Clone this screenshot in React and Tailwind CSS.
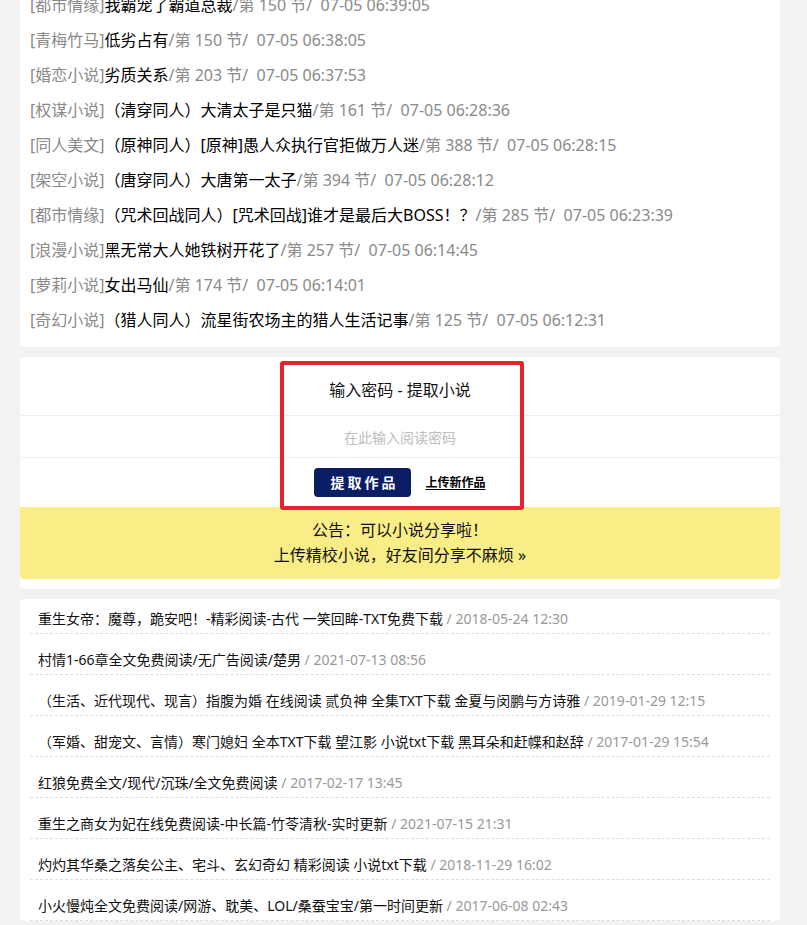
import React from "react";

const font = { fontFamily: '"Noto Sans", "Noto Sans CJK SC", sans-serif' };

const top = [
  ["都市情缘", "我霸宠了霸道总裁", "150", "07-05 06:39:05"],
  ["青梅竹马", "低劣占有", "150", "07-05 06:38:05"],
  ["婚恋小说", "劣质关系", "203", "07-05 06:37:53"],
  ["权谋小说", "（清穿同人）大清太子是只猫", "161", "07-05 06:28:36"],
  ["同人美文", "（原神同人）[原神]愚人众执行官拒做万人迷", "388", "07-05 06:28:15"],
  ["架空小说", "（唐穿同人）大唐第一太子", "394", "07-05 06:28:12"],
  ["都市情缘", "（咒术回战同人）[咒术回战]谁才是最后大BOSS！？", "285", "07-05 06:23:39"],
  ["浪漫小说", "黑无常大人她铁树开花了", "257", "07-05 06:14:45"],
  ["萝莉小说", "女出马仙", "174", "07-05 06:14:01"],
  ["奇幻小说", "（猎人同人）流星街农场主的猎人生活记事", "125", "07-05 06:12:31"],
];

const bottom = [
  ["重生女帝：魔尊，跪安吧！-精彩阅读-古代 一笑回眸-TXT免费下载", "2018-05-24 12:30"],
  ["村情1-66章全文免费阅读/无广告阅读/楚男", "2021-07-13 08:56"],
  ["（生活、近代现代、现言）指腹为婚 在线阅读 贰负神 全集TXT下载 金夏与闵鹏与方诗雅", "2019-01-29 12:15"],
  ["（军婚、甜宠文、言情）寒门媳妇 全本TXT下载 望江影 小说txt下载 黑耳朵和赶幉和赵辞", "2017-01-29 15:54"],
  ["红狼免费全文/现代/沉珠/全文免费阅读", "2017-02-17 13:45"],
  ["重生之商女为妃在线免费阅读-中长篇-竹苓清秋-实时更新", "2021-07-15 21:31"],
  ["灼灼其华桑之落矣公主、宅斗、玄幻奇幻 精彩阅读 小说txt下载", "2018-11-29 16:02"],
  ["小火慢炖全文免费阅读/网游、耽美、LOL/桑蚕宝宝/第一时间更新", "2017-06-08 02:43"],
];

export default function App() {
  return (
    <div className="h-[925px] overflow-hidden bg-[#f2f2f2]" style={font}>
      <div className="mx-[20px] w-[760px]">
        {/* top list */}
        <div className="-mt-[13px] bg-white px-[10px] pb-[10px] rounded-b-[4px]">
          {top.map((r, i) => (
            <div key={i} className="h-[35px] flex items-center text-[16px] whitespace-pre">
              <span className="text-[#8a8a8a]">[{r[0]}]</span>
              <span className="text-black">{r[1]}</span>
              <span className="text-[#8a8a8a]">/第 {r[2]} 节/  {r[3]}</span>
            </div>
          ))}
        </div>

        {/* password panel */}
        <div className="relative mt-[10px] bg-white rounded-[4px] pb-[10px]">
          <div className="h-[59px] flex items-center justify-center pt-[8px] text-[16px] text-[#111] border-b border-[#eeeeee]">
            输入密码 - 提取小说
          </div>
          <div className="h-[42px] flex items-center justify-center pt-[2px] text-[14px] text-[#bdbdbd] border-b border-[#eeeeee]">
            在此输入阅读密码
          </div>
          <div className="h-[49px] flex items-center justify-center gap-[14px]">
            <button className="w-[97px] h-[29px] rounded-[4px] bg-[#0b1d63] text-white text-[14px] font-bold tracking-[3px] pl-[3px]">
              提取作品
            </button>
            <span className="text-[12px] font-bold text-black underline underline-offset-[2px]">上传新作品</span>
          </div>
          <div className="h-[72px] bg-[#f8ed86] rounded-b-[4px] flex flex-col items-center justify-center text-[16px] text-[#111] leading-[25px]">
            <div>公告：可以小说分享啦！</div>
            <div>上传精校小说，好友间分享不麻烦 »</div>
          </div>
          <div className="absolute left-[260px] top-[4px] w-[244px] h-[149px] border-[4px] border-[#e8212b] rounded-[3px]"></div>
        </div>

        {/* bottom list */}
        <div className="mt-[10px] bg-white rounded-[4px] px-[10px]">
          {bottom.map((r, i) => (
            <div
              key={i}
              className={`border-b border-dashed border-[#dddddd] pl-[8px] pb-[4px] leading-[20px] text-[14px] whitespace-nowrap ${i === 0 ? "pt-[10px]" : "pt-[16px]"}`}
            >
              <span className="text-[#111]">{r[0]}</span>
              <span className="text-[#999999]"> / {r[1]}</span>
            </div>
          ))}
        </div>
      </div>
    </div>
  );
}
